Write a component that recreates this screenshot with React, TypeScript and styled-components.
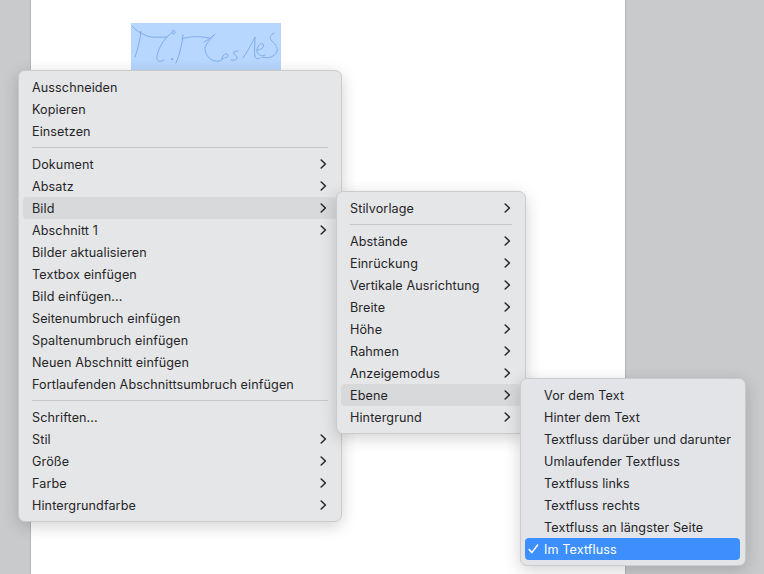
import React from "react";
import styled, { createGlobalStyle } from "styled-components";

const Global = createGlobalStyle`
  html, body { margin: 0; padding: 0; }
  body { font-family: "Inter", "Liberation Sans", sans-serif; }
`;

const Desk = styled.div`
  position: relative;
  width: 764px;
  height: 574px;
  overflow: hidden;
  background: #c9cacc;
`;

const Sheet = styled.div`
  width: 596px;
  height: 574px;
  margin-left: 30px;
  background: #ffffff;
  border-left: 1px solid #b4b5b7;
  border-right: 1px solid #b4b5b7;
  padding: 23px 0 0 100px;
  box-sizing: border-box;
`;

const Signature = styled.svg`
  display: block;
  width: 150px;
  height: 47px;
  background: #b8d7fe;
`;

const Panel = styled.div<{ $x: number; $y: number; $w: number; $tint?: boolean }>`
  position: absolute;
  left: ${(p) => p.$x}px;
  top: ${(p) => p.$y}px;
  width: ${(p) => p.$w}px;
  box-sizing: border-box;
  padding: 5px ${(p) => (p.$tint ? 5 : 4)}px 5px 4px;
  background: ${(p) => (p.$tint ? "#e2e4e7" : "#e5e6e8")};
  border: 1px solid #cbcbcd;
  border-radius: 7px;
  box-shadow: 0 4px 16px rgba(0, 0, 0, 0.18);
`;

const Row = styled.div<{ $state?: "hover" | "active" }>`
  display: flex;
  align-items: center;
  height: 22px;
  padding: 0 10px 0 9px;
  border-radius: 4px;
  font-size: 12.6px;
  letter-spacing: 0.1px;
  white-space: nowrap;
  color: ${(p) => (p.$state === "active" ? "#ffffff" : "#252527")};
  background: ${(p) =>
    p.$state === "active" ? "#3d8ffd" : p.$state === "hover" ? "#d8d9db" : "transparent"};
`;

const Label = styled.span`
  flex: 1;
`;

const Divider = styled.div`
  height: 1px;
  margin: 5px 9px;
  background: #c8c8ca;
`;

const CheckSlot = styled.span`
  width: 11px;
  margin-left: -5px;
  margin-right: 5px;
  display: flex;
  align-items: center;
`;

const Chevron = () => (
  <svg width="7" height="10" viewBox="0 0 7 10" fill="none">
    <path d="M1.2 1l4.2 4-4.2 4" stroke="#2b2b2d" strokeWidth="1.6" strokeLinecap="round" strokeLinejoin="round" />
  </svg>
);

const Check = () => (
  <svg width="11" height="10" viewBox="0 0 11 10" fill="none">
    <path d="M1.2 5.6l2.6 3L9.6 1" stroke="#ffffff" strokeWidth="1.5" strokeLinecap="round" strokeLinejoin="round" />
  </svg>
);

type Item = { t: string; sub?: boolean; hover?: boolean } | "-";

const main: Item[] = [
  { t: "Ausschneiden" },
  { t: "Kopieren" },
  { t: "Einsetzen" },
  "-",
  { t: "Dokument", sub: true },
  { t: "Absatz", sub: true },
  { t: "Bild", sub: true, hover: true },
  { t: "Abschnitt 1", sub: true },
  { t: "Bilder aktualisieren" },
  { t: "Textbox einfügen" },
  { t: "Bild einfügen..." },
  { t: "Seitenumbruch einfügen" },
  { t: "Spaltenumbruch einfügen" },
  { t: "Neuen Abschnitt einfügen" },
  { t: "Fortlaufenden Abschnittsumbruch einfügen" },
  "-",
  { t: "Schriften..." },
  { t: "Stil", sub: true },
  { t: "Größe", sub: true },
  { t: "Farbe", sub: true },
  { t: "Hintergrundfarbe", sub: true },
];

const image: Item[] = [
  { t: "Stilvorlage", sub: true },
  "-",
  { t: "Abstände", sub: true },
  { t: "Einrückung", sub: true },
  { t: "Vertikale Ausrichtung", sub: true },
  { t: "Breite", sub: true },
  { t: "Höhe", sub: true },
  { t: "Rahmen", sub: true },
  { t: "Anzeigemodus", sub: true },
  { t: "Ebene", sub: true, hover: true },
  { t: "Hintergrund", sub: true },
];

const layers = [
  "Vor dem Text",
  "Hinter dem Text",
  "Textfluss darüber und darunter",
  "Umlaufender Textfluss",
  "Textfluss links",
  "Textfluss rechts",
  "Textfluss an längster Seite",
];

const Items = ({ items }: { items: Item[] }) => (
  <>
    {items.map((it, i) =>
      it === "-" ? (
        <Divider key={i} />
      ) : (
        <Row key={i} $state={it.hover ? "hover" : undefined}>
          <Label>{it.t}</Label>
          {it.sub && <Chevron />}
        </Row>
      )
    )}
  </>
);

const LayerRow = styled(Row)`
  padding-left: 19px;
`;

const ActiveRow = styled(Row)`
  padding-left: 8px;
`;

export default function App() {
  return (
    <Desk>
      <Global />
      <Sheet>
        <Signature viewBox="0 0 150 47" fill="none">
          <g stroke="#7ba6ec" strokeWidth="0.9" strokeLinecap="round" strokeLinejoin="round">
            <path d="M1 3c3 4 8 7 15 10 6 2 13 1 20 1" />
            <path d="M10 8C9 17 7 26 4 34" />
            <path d="M41 8c1-1 3-1 3 1 0 2-1 2-2 2M42 9C35 13 28 23 26 33c-1 5 3 7 7 4" />
            <circle cx="41" cy="36" r="0.7" />
            <path d="M52 12c-1 9-3 19-7 28" />
            <path d="M51 16c7-3 17-3 27-1" />
            <path d="M73 19c4-2 8-5 10-7M84 11C79 16 75 21 74 25c0 6 4 12 10 13 4 1 7-1 9-3" />
            <path d="M91 36c0-3 3-6 5-5 2 1 1 4-2 4M100 37c4 1 7-1 6-3-1-2-4-2-3-5 1-1 3-1 4-1" />
            <path d="M112 35c4-6 9-14 12-21 0 8-1 15 0 20 1 2 3 2 5 1" />
            <path d="M126 27c4 0 8-3 6-6-2-2-7 3-6 8 1 3 5 5 8 3" />
            <path d="M143 10c-4 2-5 5-2 8 4 4 6 7 5 10-2 6-9 8-15 6" />
          </g>
        </Signature>
      </Sheet>

      <Panel $x={18} $y={70} $w={324}>
        <Items items={main} />
      </Panel>

      <Panel $x={336} $y={191} $w={190}>
        <Items items={image} />
      </Panel>

      <Panel $x={520} $y={378} $w={226} $tint>
        {layers.map((t) => (
          <LayerRow key={t}>
            <Label>{t}</Label>
          </LayerRow>
        ))}
        <ActiveRow $state="active">
          <CheckSlot>
            <Check />
          </CheckSlot>
          <Label>Im Textfluss</Label>
        </ActiveRow>
      </Panel>
    </Desk>
  );
}
